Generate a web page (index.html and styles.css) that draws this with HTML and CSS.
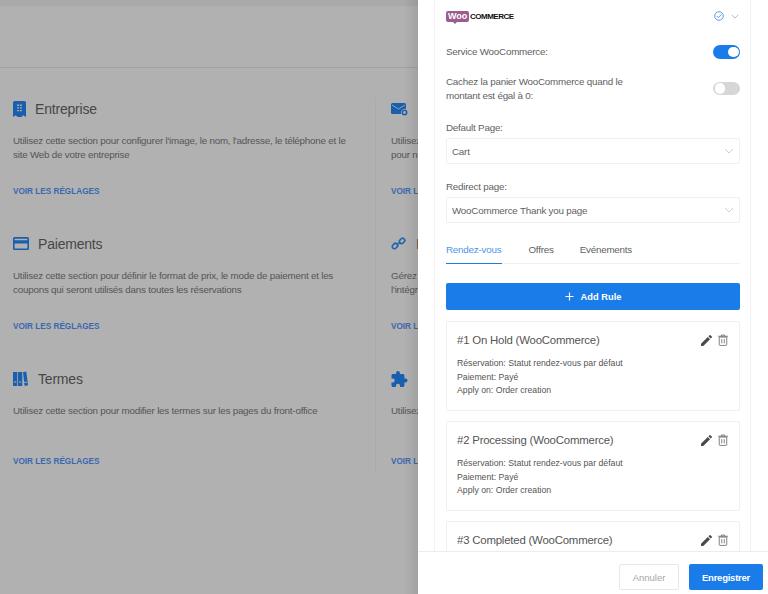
FILE: index.html
```html
<!DOCTYPE html>
<html lang="fr">
<head>
<meta charset="utf-8">
<title>Réglages</title>
<link rel="stylesheet" href="styles.css">
</head>
<body>
<div class="app">
  <main class="backdrop">
    <div class="topband"></div>
    <div class="pagehead"></div>
    <section class="grid">
      <article class="tile">
        <h2 class="tile-title"><svg class="tile-icon" viewBox="0 0 14 18" preserveAspectRatio="none"><path fill-rule="evenodd" d="M2 0h10a2 2 0 0 1 2 2v16l-3-2-2 2H5l-2-2-3 2V2a2 2 0 0 1 2-2zM4.500 4v1.500H6.500V4zM7.500 4v1.500H9.500V4zM4.500 7v1.500H6.500V7zM7.500 7v1.500H9.500V7zM4.500 10v1.500H6.500V10zM7.500 10v1.500H9.500V10z"/></svg>Entreprise</h2>
        <p class="tile-text">Utilisez cette section pour configurer l'image, le nom, l'adresse, le téléphone et le site Web de votre entreprise</p>
        <a class="tile-link">VOIR LES RÉGLAGES</a>
      </article>
      <article class="tile tile-side">
        <h2 class="tile-title"><svg class="tile-icon wide" viewBox="0 0 17 14"><path d="M1.500 1h12A1.500 1.500 0 0 1 15 2.500V7a4 4 0 0 0-5 5H1.500A1.500 1.500 0 0 1 0 10.500v-8A1.500 1.500 0 0 1 1.500 1z"/><path class="cut" d="M1 3l6.500 4L14 3"/><circle class="ring" cx="13.500" cy="10.500" r="2.200"/></svg>Notifications</h2>
        <p class="tile-text">Utilisez cette section pour configurer l'adresse e-mail et le numéro de téléphone pour notifier vos clients</p>
        <a class="tile-link">VOIR LES RÉGLAGES</a>
      </article>
      <article class="tile">
        <h2 class="tile-title"><svg class="tile-icon card" viewBox="2 4 20 16" preserveAspectRatio="none"><path d="M20 4H4c-1.110 0-1.990.89-1.990 2L2 18c0 1.110.89 2 2 2h16c1.110 0 2-.89 2-2V6c0-1.110-.89-2-2-2zm0 14H4v-6h16v6zm0-10H4V6h16v2z"/></svg>Paiements</h2>
        <p class="tile-text">Utilisez cette section pour définir le format de prix, le mode de paiement et les coupons qui seront utilisés dans toutes les réservations</p>
        <a class="tile-link">VOIR LES RÉGLAGES</a>
      </article>
      <article class="tile tile-side">
        <h2 class="tile-title"><svg class="tile-icon chain" viewBox="0 0 16 16"><path d="M6.500 9.500l3-3"/><rect x="1.200" y="8.500" width="6" height="4.500" rx="2" transform="rotate(-45 4.200 10.750)"/><rect x="8.800" y="3" width="6" height="4.500" rx="2" transform="rotate(-45 11.800 5.250)"/></svg>Intégrations</h2>
        <p class="tile-text">Gérez les services tiers et les paramètres de synchronisation disponibles avec l'intégration de vos calendriers</p>
        <a class="tile-link">VOIR LES RÉGLAGES</a>
      </article>
      <article class="tile">
        <h2 class="tile-title"><svg class="tile-icon books" viewBox="0 0 15 15"><path fill-rule="evenodd" d="M0 1h4.300v14H0zM5 1h4.300v14H5zM10 1.300l3.300-.8L15 14.300l-3.400.7zM1 10.500v1h2.300v-1zM6 10.500v1h2.300v-1zM11.300 10.800v1h2.600v-1z"/></svg>Termes</h2>
        <p class="tile-text">Utilisez cette section pour modifier les termes sur les pages du front-office</p>
        <a class="tile-link">VOIR LES RÉGLAGES</a>
      </article>
      <article class="tile tile-side tile-end">
        <h2 class="tile-title"><svg class="tile-icon wide" viewBox="2 1 21 21"><path d="M20.500 11H19V7c0-1.100-.9-2-2-2h-4V3.500C13 2.120 11.880 1 10.500 1S8 2.120 8 3.500V5H4c-1.100 0-1.990.9-1.990 2v3.800H3.500c1.490 0 2.700 1.210 2.700 2.700s-1.210 2.700-2.700 2.700H2V20c0 1.100.9 2 2 2h3.800v-1.500c0-1.490 1.210-2.700 2.700-2.700 1.490 0 2.700 1.210 2.700 2.700V22H17c1.100 0 2-.9 2-2v-4h1.500c1.380 0 2.500-1.120 2.500-2.500S21.880 11 20.500 11z"/></svg>Add-ons</h2>
        <p class="tile-text">Utilisez cette section pour gérer les modules complémentaires</p>
        <a class="tile-link">VOIR LES RÉGLAGES</a>
      </article>
    </section>
  </main>

  <aside class="drawer">
    <div class="drawer-body">
      <div class="panel">
        <header class="panel-head">
          <span class="logo"><span class="logo-woo">Woo</span><span class="logo-commerce">COMMERCE</span></span>
          <span class="panel-actions">
            <svg class="check" viewBox="0 0 12 12"><circle cx="6" cy="6" r="4.300"/><path d="M3.800 6l1.600 1.600 3-3.200"/></svg>
            <svg class="chev" viewBox="0 0 10 6"><path d="M1 1l4 4 4-4"/></svg>
          </span>
        </header>

        <div class="switch-row first">
          <span class="field-label">Service WooCommerce:</span>
          <span class="switch on"></span>
        </div>
        <div class="switch-row second">
          <span class="field-label narrow">Cachez la panier WooCommerce quand le montant est égal à 0:</span>
          <span class="switch"></span>
        </div>

        <label class="field-label field-title">Default Page:</label>
        <div class="select">Cart<svg class="chev light" viewBox="0 0 10 6"><path d="M1 1l4 4 4-4"/></svg></div>
        <label class="field-label field-title">Redirect page:</label>
        <div class="select">WooCommerce Thank you page<svg class="chev light" viewBox="0 0 10 6"><path d="M1 1l4 4 4-4"/></svg></div>

        <nav class="tabs">
          <span class="tab active">Rendez-vous</span>
          <span class="tab">Offres</span>
          <span class="tab">Evénements</span>
        </nav>

        <button class="add-rule" type="button"><svg viewBox="0 0 10 10"><path d="M5 .5v9M.5 5h9"/></svg>Add Rule</button>

        <div class="rule">
          <div class="rule-head">
            <h3 class="rule-title">#1 On Hold (WooCommerce)</h3>
            <span class="rule-actions">
              <svg class="pen" viewBox="3 3 18 18"><path d="M3 17.250V21h3.750L17.810 9.940l-3.750-3.750L3 17.250zM20.710 7.040c.39-.39.39-1.020 0-1.410l-2.340-2.340c-.39-.39-1.020-.39-1.410 0l-1.830 1.830 3.750 3.750 1.830-1.830z"/></svg>
              <svg class="bin" viewBox="0 0 12 14"><path d="M1.500 3.500h9v9a1 1 0 0 1-1 1h-7a1 1 0 0 1-1-1zM0 2.500h12M4 2.500V1h4v1.500M4.500 6v5M7.500 6v5"/></svg>
            </span>
          </div>
          <p class="rule-line">Réservation: Statut rendez-vous par défaut</p>
          <p class="rule-line">Paiement: Payé</p>
          <p class="rule-line">Apply on: Order creation</p>
        </div>
        <div class="rule">
          <div class="rule-head">
            <h3 class="rule-title">#2 Processing (WooCommerce)</h3>
            <span class="rule-actions">
              <svg class="pen" viewBox="3 3 18 18"><path d="M3 17.250V21h3.750L17.810 9.940l-3.750-3.750L3 17.250zM20.710 7.040c.39-.39.39-1.020 0-1.410l-2.340-2.340c-.39-.39-1.020-.39-1.410 0l-1.830 1.830 3.750 3.750 1.830-1.830z"/></svg>
              <svg class="bin" viewBox="0 0 12 14"><path d="M1.500 3.500h9v9a1 1 0 0 1-1 1h-7a1 1 0 0 1-1-1zM0 2.500h12M4 2.500V1h4v1.500M4.500 6v5M7.500 6v5"/></svg>
            </span>
          </div>
          <p class="rule-line">Réservation: Statut rendez-vous par défaut</p>
          <p class="rule-line">Paiement: Payé</p>
          <p class="rule-line">Apply on: Order creation</p>
        </div>
        <div class="rule">
          <div class="rule-head">
            <h3 class="rule-title">#3 Completed (WooCommerce)</h3>
            <span class="rule-actions">
              <svg class="pen" viewBox="3 3 18 18"><path d="M3 17.250V21h3.750L17.810 9.940l-3.750-3.750L3 17.250zM20.710 7.040c.39-.39.39-1.020 0-1.410l-2.340-2.340c-.39-.39-1.020-.39-1.410 0l-1.830 1.830 3.750 3.750 1.830-1.830z"/></svg>
              <svg class="bin" viewBox="0 0 12 14"><path d="M1.500 3.500h9v9a1 1 0 0 1-1 1h-7a1 1 0 0 1-1-1zM0 2.500h12M4 2.500V1h4v1.500M4.500 6v5M7.500 6v5"/></svg>
            </span>
          </div>
        </div>
      </div>
    </div>
    <footer class="drawer-foot">
      <button class="btn btn-ghost" type="button">Annuler</button>
      <button class="btn btn-primary" type="button">Enregistrer</button>
    </footer>
  </aside>
</div>
</body>
</html>
```

FILE: styles.css
```css
* { box-sizing: border-box; }
html, body { margin: 0; height: 100%; }
body { font-family: "Liberation Sans", Arial, sans-serif; background: #b1b1b1; overflow: hidden; }
h2, h3, p { margin: 0; font-weight: 400; }
.app { display: flex; width: 768px; height: 594px; overflow: hidden; }

/* dimmed page */
.backdrop { flex: 0 0 418px; height: 594px; overflow: hidden; background: #b1b1b1; position: relative; }
.backdrop::after { content: ""; position: absolute; top: 0; right: 0; bottom: 0; width: 14px; background: linear-gradient(to right, rgba(0,0,0,0), rgba(0,0,0,.09)); }
.topband { height: 6px; background: #a9a9a9; }
.pagehead { height: 62px; border-bottom: 1px solid #a3a3a3; }
.grid { display: grid; grid-template-columns: 375px 375px; grid-auto-rows: 135px; width: 750px; padding-top: 29px; }
.tile { padding: 0 14px 0 13px; display: flex; flex-direction: column; align-items: flex-start; }
.tile-side { padding-left: 15px; border-left: 1px solid #ababab; }
.tile-end { height: 106px; }
.tile-title { display: flex; align-items: center; height: 23px; margin-bottom: 1px; font-size: 14px; letter-spacing: -.2px; color: #474747; white-space: nowrap; }
.tile-icon { width: 13px; height: 16px; margin-right: 9px; fill: #1a5eae; flex: none; }
.tile-icon.wide { width: 17px; height: 16px; margin-right: 10px; }
.tile-icon.card { width: 16px; height: 13px; margin-right: 9px; }
.tile-icon.books { width: 15px; height: 15px; margin-right: 10px; }
.tile-icon.chain { width: 15px; height: 15px; margin-right: 10px; fill: none; stroke: #2565ad; stroke-width: 1.800; }
.cut { fill: none; stroke: #b1b1b1; stroke-width: .8; }
.ring { fill: #b1b1b1; stroke: #1a5eae; stroke-width: 1.500; }
.tile-text { margin-top: 13px; font-size: 9.800px; letter-spacing: -.21px; line-height: 14px; color: #555; width: 345px; height: 28px; }
.tile-link { margin-top: 23px; font-size: 8.200px; line-height: 14px; font-weight: 700; color: #3a68b0; white-space: nowrap; }

/* drawer */
.drawer { flex: 0 0 350px; height: 594px; background: #fff; display: flex; flex-direction: column; }
.drawer-body { height: 551px; overflow: hidden; padding: 0 17px 0 16px; }
.panel { border: 1px solid #f2f2f2; border-width: 0 1px; padding: 0 10px 0 11px; height: 100%; }
.panel-head { display: flex; justify-content: space-between; align-items: center; height: 32px; }
.logo { display: flex; align-items: center; }
.logo-woo { position: relative; font-size: 9px; line-height: 11px; height: 11px; padding: 0 2px; font-weight: 700; letter-spacing: -.1px; color: #fff; background: #9b5c8f; border-radius: 2px; }
.logo-woo::after { content: ""; position: absolute; left: 7px; bottom: -2px; border: 2px solid transparent; border-top-color: #9b5c8f; border-bottom: 0; }
.logo-commerce { font-size: 8px; font-weight: 700; color: #111; margin-left: 1px; letter-spacing: -.5px; }
.panel-actions { display: flex; align-items: center; gap: 6px; padding-right: 1px; }
.check { width: 12px; height: 12px; fill: none; stroke: #5f9ce0; stroke-width: 1; }
.chev { width: 8px; height: 5px; fill: none; stroke: #a8a8a8; stroke-width: 1; }
.chev.light { stroke: #cfcfcf; width: 10px; height: 6px; }
.field-label { font-size: 9.800px; letter-spacing: -.21px; line-height: 14px; color: #5f5f5f; display: block; }
.narrow { width: 190px; }
.switch-row { display: flex; justify-content: space-between; align-items: center; }
.switch-row.first { margin-top: 6px; height: 28px; }
.switch-row.second { margin-top: 2.500px; height: 40px; margin-bottom: 12.500px; }
.switch { width: 27px; height: 13.500px; border-radius: 7px; background: #d6d6d6; position: relative; display: block; flex: none; }
.switch::after { content: ""; position: absolute; top: 1.500px; left: 1.500px; width: 10.500px; height: 10.500px; border-radius: 50%; background: #fff; }
.switch.on { background: #1a7ce8; }
.switch.on::after { left: auto; right: 1.500px; }
.field-title { height: 14px; margin-bottom: 3px; }
.select { display: flex; justify-content: space-between; align-items: center; height: 26px; margin-bottom: 16px; padding: 0 5px 0 5px; border: 1px solid #f0f0f0; border-radius: 2px; font-size: 9.800px; letter-spacing: -.21px; color: #5f5f5f; }
.tabs { display: flex; gap: 26px; height: 26px; margin-top: -1px; border-bottom: 1px solid #f0f0f0; }
.tab { font-size: 9.800px; letter-spacing: -.21px; line-height: 24px; color: #5f5f5f; height: 26px; }
.tab.active { color: #4d96e8; border-bottom: 1px solid #1a7ce8; padding-right: 1px; }
.add-rule { display: flex; align-items: center; justify-content: center; gap: 7px; width: 100%; height: 27px; margin-top: 19px; border: 0; border-radius: 2px; background: #1a7ce8; color: #fff; font: 700 9.300px "Liberation Sans", Arial, sans-serif; }
.add-rule svg { width: 9px; height: 9px; fill: none; stroke: #fff; stroke-width: 1.300; }
.rule { height: 90px; margin-top: 10px; padding: 10px 11px 0 10px; border: 1px solid #f0f0f0; border-radius: 2px; }
.add-rule + .rule { margin-top: 11px; }
.rule-head { display: flex; justify-content: space-between; align-items: center; height: 16px; margin-bottom: 9px; }
.rule-title { font-size: 11.400px; letter-spacing: -.2px; color: #555; }
.rule-actions { display: flex; align-items: center; gap: 6px; }
.pen { width: 11px; height: 11px; fill: #4a4a4a; }
.bin { width: 10px; height: 12px; fill: none; stroke: #6a6a6a; stroke-width: 1; }
.rule-line { font-size: 8.700px; line-height: 13.500px; color: #555; }
.drawer-foot { height: 43px; display: flex; justify-content: flex-end; align-items: flex-start; gap: 10px; padding: 12px 5px 0 0; border-top: 1px solid #ececec; background: #fff; }
.btn { height: 26px; border-radius: 2px; font: 400 9.500px "Liberation Sans", Arial, sans-serif; }
.btn-ghost { width: 60px; background: #fff; color: #a6a6a6; border: 1px solid #e8e8e8; }
.btn-primary { width: 74px; background: #1a7ce8; color: #fff; border: 0; font-weight: 700; letter-spacing: -.25px; }
```
